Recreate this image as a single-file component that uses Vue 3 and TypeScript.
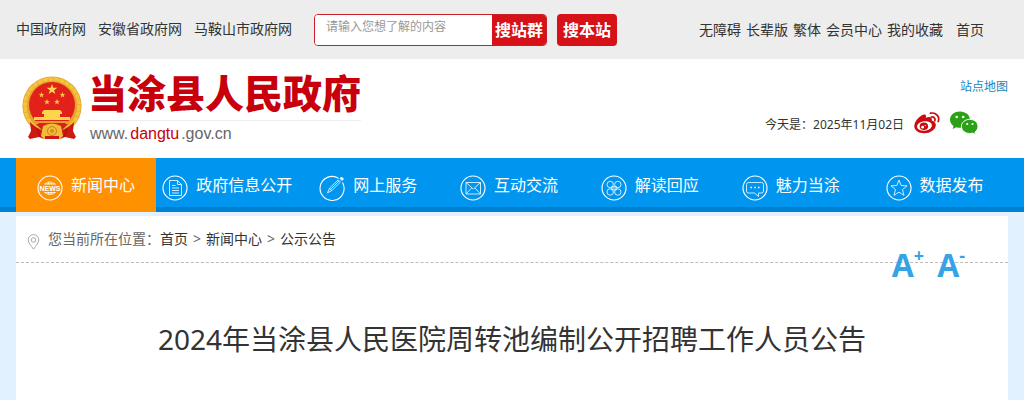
<script setup lang="ts">
import { ref } from 'vue'

interface NavItem { label: string; icon: string }

const sites: string[] = ['中国政府网', '安徽省政府网', '马鞍山市政府网']
const tools: string[] = ['无障碍', '长辈版', '繁体', '会员中心', '我的收藏']
const nav: NavItem[] = [
  { label: '新闻中心', icon: 'news' },
  { label: '政府信息公开', icon: 'doc' },
  { label: '网上服务', icon: 'pen' },
  { label: '互动交流', icon: 'mail' },
  { label: '解读回应', icon: 'clover' },
  { label: '魅力当涂', icon: 'chat' },
  { label: '数据发布', icon: 'star' },
]
const active = ref(0)
const keyword = ref('')
</script>

<template>
  <div class="page">
    <div class="topbar">
      <nav class="sites">
        <a v-for="s in sites" :key="s" href="#">{{ s }}</a>
      </nav>
      <form class="search" @submit.prevent>
        <div class="field">
          <input v-model="keyword" type="text" aria-label="搜索" placeholder="请输入您想了解的内容" />
          <button type="submit">搜站群</button>
        </div>
        <button type="button" class="local">搜本站</button>
      </form>
      <nav class="tools">
        <a v-for="t in tools" :key="t" href="#">{{ t }}</a>
        <a href="#" class="home">首页</a>
      </nav>
    </div>

    <header class="header">
      <a class="brand" href="#">
        <svg class="emblem" viewBox="0 0 60 64" aria-hidden="true">
          <circle cx="30" cy="30" r="29.600" fill="#e3a62b" />
          <circle cx="30" cy="30" r="27" fill="none" stroke="#f4c440" stroke-width="3.500" stroke-dasharray="5 .6" />
          <circle cx="30" cy="29" r="23" fill="#e3211b" />
          <path d="M30 8l1.300 3.800h4l-3.200 2.400 1.200 3.900-3.300-2.400-3.300 2.400 1.200-3.900-3.200-2.400h4z" fill="#ffd84a" />
          <g fill="#f8c53c">
            <path id="emblem-star" d="M19.500 16l.8 2h2l-1.600 1.300.6 2.100-1.800-1.200-1.800 1.200.6-2.100-1.600-1.300h2z" />
            <use href="#emblem-star" x="21" />
            <use href="#emblem-star" x="5.500" y="7" />
            <use href="#emblem-star" x="15.500" y="7" />
          </g>
          <path d="M22 34h16l2 2v2h-2v3h10v3H12v-3h10v-3h-2v-2z" fill="#ffd54c" />
          <path d="M12 45h36v2H12z" fill="#e89d25" />
          <path d="M8 46q6 6 12 8l2 9-5-2-9 2-2-2 3-6zM52 46q-6 6-12 8l-2 9 5-2 9 2 2-2-3-6z" fill="#cf1a14" />
          <path d="M14 48h32l-6 6H20z" fill="#d81f18" />
          <path d="M15 53l3 8M45 53l-3 8" stroke="#9d120e" />
          <path d="M21 50q9-5 18 0l2 10-3 3H22l-3-3z" fill="#f0bc3a" />
          <circle cx="30" cy="55" r="4.500" fill="none" stroke="#c98218" />
          <circle cx="30" cy="55" r="2" fill="#d2901f" />
          <path d="M23 63v-3h14v3z" fill="#cf1a14" />
        </svg>
        <span class="names">
          <strong>当涂县人民政府</strong>
          <span class="domain">www.<em>dangtu</em>.gov.cn</span>
        </span>
      </a>
      <div class="aside">
        <a class="map" href="#">站点地图</a>
        <div class="today">
          <span>今天是：2025年11月02日</span>
          <a href="#" aria-label="微博">
            <svg class="weibo" viewBox="0 0 26 22" aria-hidden="true">
              <path d="M10 2.500c1.600-.5 2.600.8 1.800 3.300 3.300-1.300 6.700-1 6 2.700 2.600.8 4 2.300 4 4.500 0 4.500-5.300 8.300-11.500 8.300C4.500 21.300.3 18.500.3 14.300.3 9 6 3.500 10 2.500z" fill="#c90c10" />
              <ellipse cx="10.500" cy="14" rx="7.500" ry="4.700" fill="#fff" transform="rotate(-7 10.500 14)" />
              <ellipse cx="9.900" cy="14.300" rx="4.200" ry="3.800" fill="#c90c10" />
              <circle cx="8.600" cy="15.200" r="1.400" fill="#fff" />
              <circle cx="11.200" cy="13.600" r=".7" fill="#fff" />
              <path d="M16.500 1.200c5.500-1.200 9.500 3.500 7.700 8.300M17.300 5c2.700-.5 4.200 1.500 3.500 3.800" fill="none" stroke="#c90c10" stroke-width="1.700" stroke-linecap="round" />
            </svg>
          </a>
          <a href="#" aria-label="微信">
            <svg class="wechat" viewBox="0 0 28 24" aria-hidden="true">
              <path d="M10 .5C4.500.5 0 4 0 8.700c0 2.600 1.400 4.700 3.500 6.200L2.700 18l3.600-1.800c1.200.4 2.500.6 3.700.6 5.600 0 10-3.500 10-8.100S15.600.5 10 .5z" fill="#2ba118" />
              <path d="M19.800 8.300c-4.700 0-8.400 3.100-8.400 7.100s3.700 7.100 8.400 7.100c1 0 2-.2 2.900-.4l2.900 1.600-.7-2.600c1.900-1.300 3.100-3.300 3.100-5.700 0-4-3.700-7.100-8.200-7.100z" fill="#2ba118" stroke="#fff" stroke-width="1" />
              <g fill="#fff"><circle cx="6.700" cy="6" r="1.300" /><circle cx="13.200" cy="6" r="1.300" /><circle cx="17.200" cy="13" r="1.100" /><circle cx="22.500" cy="13" r="1.100" /></g>
            </svg>
          </a>
        </div>
      </div>
    </header>

    <nav class="mainnav">
      <ul>
        <li v-for="(item, i) in nav" :key="item.icon">
          <a href="#" :class="{ active: i === active }" @click.prevent="active = i">
            <svg viewBox="0 0 26 26" aria-hidden="true" fill="none" stroke="currentColor" stroke-width=".8">
              <path v-if="item.icon === 'pen'" d="M19.500 3.300A12 12 0 1 0 23.500 7.500" stroke-width="1.100" />
              <circle v-else cx="13" cy="13" r="12" stroke-width="1.100" />
              <g v-if="item.icon === 'news'">
                <path d="M7 9.500a7 6 0 0 1 12 0zM7 17a7 6 0 0 0 12 0z" fill="currentColor" stroke="none" />
                <path d="M13 5v4.500M13 17v4.500M10 6v3.500M16 6v3.500M10 17v3.500M16 17v3.500M8 7.800h10M8 18.800h10" stroke="#ff9000" stroke-width=".5" />
                <text x="13" y="15.500" text-anchor="middle">NEWS</text>
              </g>
              <path v-else-if="item.icon === 'doc'" d="M7.500 5.500h8l4 4v11h-12zM15.500 5.500v4h4M10 10.500h3.500M10 13h7M10 15.500h7M10 18h7" />
              <g v-else-if="item.icon === 'pen'">
                <path d="M8.500 17.800l2-4.600L19.200 4.800l2.200 2.200-8.600 8.600zM10.500 13.200l2.300 2.400M11.500 14.500L20 6" />
                <path d="M21 3.500l1.500-1.500 2 2L23 5.500z" fill="currentColor" />
              </g>
              <path v-else-if="item.icon === 'mail'" d="M6 7.500h14.500v11.500H6zM6 7.500l7.250 6.500 7.250-6.500M6 19l5.500-6M20.500 19l-5.500-6" />
              <g v-else-if="item.icon === 'clover'">
                <circle cx="9.200" cy="9.500" r="3.200" /><circle cx="16.800" cy="9.500" r="3.200" />
                <circle cx="9.200" cy="17" r="3.200" /><circle cx="16.800" cy="17" r="3.200" />
                <path d="M10.500 11.500h5v3.500h-5z" fill="currentColor" fill-opacity=".4" stroke-opacity=".6" />
              </g>
              <g v-else-if="item.icon === 'chat'">
                <path d="M6.500 7.500h13q2 0 2 2v6.500q0 2-2 2h-3v3.500l-4-3.500h-6q-2 0-2-2V9.500q0-2 2-2z" />
                <path d="M8.500 12.500H10M12.300 12.500h1.500M16 12.500h1.500" stroke-width="1.500" />
              </g>
              <path v-else d="M13 5l2.200 5.500 5.800.4-4.500 3.700 1.500 5.700-5-3.100-5 3.100 1.500-5.700L5 10.900l5.800-.4z" />
            </svg>
            <span>{{ item.label }}</span>
          </a>
        </li>
      </ul>
    </nav>

    <main class="content">
      <div class="crumbs">
        <svg viewBox="0 0 12 16" aria-hidden="true" fill="none" stroke="#aaa">
          <path d="M6 15.200C3.500 11.500.7 8.700.7 5.900a5.300 5.300 0 0 1 10.600 0c0 2.800-2.800 5.600-5.300 9.300z" />
          <circle cx="6" cy="6" r="2.300" />
        </svg>
        <span>您当前所在位置：</span>
        <a href="#">首页</a><i>&gt;</i><a href="#">新闻中心</a><i>&gt;</i><a href="#">公示公告</a>
      </div>
      <div class="sizer">
        <button type="button" aria-label="放大字体">A<sup>+</sup></button>
        <button type="button" aria-label="缩小字体">A<sup>-</sup></button>
      </div>
      <h1>2024年当涂县人民医院周转池编制公开招聘工作人员公告</h1>
    </main>
  </div>
</template>

<style>
body {
  margin: 0;
  background: #e1f1ff;
}
</style>

<style scoped>
.page {
  font-family: "Noto Sans", "Noto Sans CJK SC", sans-serif;
  font-size: 14px;
  color: #333;
}
a {
  color: inherit;
  text-decoration: none;
}
button {
  border: 0;
  padding: 0;
  font-family: inherit;
  cursor: pointer;
}
.topbar {
  display: flex;
  align-items: center;
  height: 59px;
  padding: 0 40px 0 16px;
  background: #ededed;
  white-space: nowrap;
}
.sites {
  display: flex;
  gap: 12px;
  padding-bottom: 4px;
}
.search {
  display: flex;
  gap: 10px;
  margin-left: 22px;
}
.field {
  display: flex;
  width: 233px;
  height: 32px;
  box-sizing: border-box;
  border: 1px solid #c8202a;
  border-radius: 4px;
  background: #fff;
  overflow: hidden;
}
.field input {
  flex: 1;
  min-width: 0;
  border: 0;
  padding: 0 11px 6px;
  outline: 0;
  font: 12px "Noto Sans", "Noto Sans CJK SC", sans-serif;
}
.field input::placeholder {
  color: #999;
}
.search button {
  width: 54px;
  padding-bottom: 2px;
  background: #d71118;
  color: #fff;
  font-size: 16px;
  font-weight: 700;
}
.search .local {
  width: 60px;
  border-radius: 4px;
}
.tools {
  display: flex;
  gap: 5px;
  margin-left: auto;
  padding-bottom: 2px;
}
.home {
  margin-left: 8px;
}
.header {
  display: flex;
  justify-content: space-between;
  height: 99px;
  padding: 0 16px 0 22px;
  background: #fff;
}
.brand {
  display: flex;
  align-items: flex-start;
  gap: 6px;
  padding-top: 15px;
}
.emblem {
  width: 60px;
  height: 64px;
  margin-top: 2px;
}
.names {
  display: flex;
  flex-direction: column;
}
.names strong {
  padding-bottom: 8px;
  border-bottom: 1px solid #eee;
  font-size: 39px;
  line-height: 38px;
  font-weight: 900;
  color: #c7000b;
}
.domain {
  padding: 3px 2px;
  font: 16px/20px "Liberation Sans", Arial, sans-serif;
  color: #666;
}
.domain em {
  margin: 0 2px;
  font-style: normal;
  color: #c7000b;
}
.aside {
  display: flex;
  flex-direction: column;
  align-items: flex-end;
  padding-top: 19px;
  font-size: 12px;
  line-height: 18px;
}
.map {
  color: #2385c0;
}
.today {
  display: flex;
  align-items: center;
  gap: 10px;
  margin-top: 15px;
  padding-right: 30px;
}
.today span {
  padding-top: 4px;
}
.today a {
  display: flex;
}
.weibo {
  width: 26px;
  height: 22px;
}
.wechat {
  width: 28px;
  height: 24px;
}
.mainnav {
  padding: 0 16px;
  background: linear-gradient(to top, #0080d0 5px, #0096f0 5px);
}
.mainnav ul {
  display: flex;
  margin: 0;
  padding: 0;
  list-style: none;
}
.mainnav li {
  flex: 0 0 14.2%;
}
.mainnav li:last-child {
  flex: 1;
}
.mainnav a {
  display: flex;
  align-items: center;
  justify-content: center;
  gap: 8px;
  height: 54px;
  margin-right: 1px;
  color: #fff;
  font-size: 16px;
  white-space: nowrap;
}
.mainnav li:not(:first-child) a {
  padding-left: 1px;
}
.mainnav a.active {
  background: #ff9000;
}
.mainnav span {
  padding-bottom: 2px;
}
.mainnav svg {
  width: 26px;
  height: 26px;
  margin-top: 5px;
}
.mainnav text {
  font: 700 7px "Liberation Sans", Arial, sans-serif;
  fill: #fff;
  stroke: none;
}
.content {
  position: relative;
  min-height: 184px;
  margin: 4px 16px 0;
  background: #fff;
}
.crumbs {
  display: flex;
  align-items: center;
  height: 46px;
  padding-left: 11px;
  border-bottom: 1px dashed #bbb;
  color: #666;
}
.crumbs svg {
  width: 13px;
  height: 16px;
  margin: 5px 8px 0 0;
}
.crumbs span,
.crumbs a,
.crumbs i {
  padding-bottom: 2px;
}
.crumbs a {
  color: #333;
}
.crumbs i {
  width: 18px;
  font-style: normal;
  text-align: center;
}
.sizer {
  position: absolute;
  top: 30px;
  right: 43px;
  display: flex;
  gap: 13px;
}
.sizer button {
  display: flex;
  background: none;
  color: #36a3e6;
  font: 700 32px/38px "Open Sans", "Noto Sans", sans-serif;
}
.sizer sup {
  font-size: 18px;
  line-height: 18px;
}
h1 {
  margin: 0;
  padding: 56px 16px;
  font-size: 28px;
  line-height: 40px;
  font-weight: 400;
  text-align: center;
}
</style>
